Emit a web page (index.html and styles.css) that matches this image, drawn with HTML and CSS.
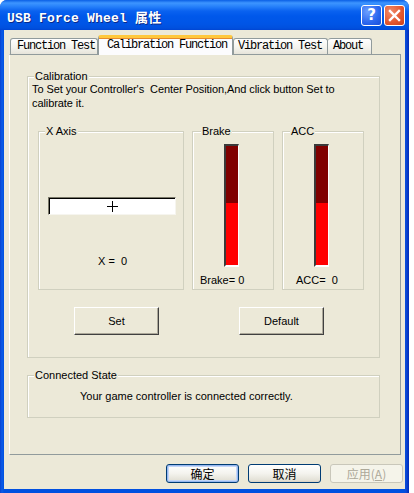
FILE: index.html
```html
<!DOCTYPE html>
<html>
<head>
<meta charset="utf-8">
<link rel="stylesheet" href="styles.css">
</head>
<body>
<div class="window">
  <div class="titlebar">
    <span class="title">USB Force Wheel <span class="cjk">属性</span></span>
    <div class="tbtns">
      <span class="tbtn help">?</span>
      <span class="tbtn close"><svg width="13" height="13" viewBox="0 0 13 13"><path d="M2 2 L11 11 M11 2 L2 11" stroke="#fff" stroke-width="2.4" stroke-linecap="square"/></svg></span>
    </div>
  </div>
  <div class="body">
    <div class="tabs">
      <div class="tab t1">Function Test</div>
      <div class="tab t2 active">Calibration Function</div>
      <div class="tab t3">Vibration Test</div>
      <div class="tab t4">About</div>
    </div>
    <div class="panel">
      <div class="group cal">
        <span class="glabel">Calibration</span>
        <p class="intro">To Set your Controller's&nbsp; Center Position,And click button Set to<br>calibrate it.</p>
        <div class="axes">
          <div class="group xaxis">
            <span class="glabel">X Axis</span>
            <div class="slider"><svg width="11" height="11" viewBox="0 0 11 11"><path d="M5.5 0 V11 M0 5.5 H11" stroke="#000" stroke-width="1"/></svg></div>
            <div class="val">X =&nbsp; 0</div>
          </div>
          <div class="group pedal brake">
            <span class="glabel">Brake</span>
            <div class="bar"><div class="fill" style="height:62px"></div></div>
            <div class="val">Brake= 0</div>
          </div>
          <div class="group pedal acc">
            <span class="glabel">ACC</span>
            <div class="bar"><div class="fill" style="height:62px"></div></div>
            <div class="val">ACC=&nbsp; 0</div>
          </div>
        </div>
        <div class="actions">
          <button class="cbtn">Set</button>
          <button class="cbtn">Default</button>
        </div>
      </div>
      <div class="group conn">
        <span class="glabel">Connected State</span>
        <div class="state">Your game controller is connected correctly.</div>
      </div>
    </div>
    <div class="footer">
      <button class="xbtn default">确定</button>
      <button class="xbtn">取消</button>
      <button class="xbtn disabled">应用(<u>A</u>)</button>
    </div>
  </div>
</div>
</body>
</html>
```
FILE: styles.css
```css
html, body {
  margin: 0;
  padding: 0;
  background: #ffffff;
}
body {
  font-family: "Liberation Sans", Arial, sans-serif;
  font-size: 11px;
  color: #000;
}
.window {
  width: 409px;
  height: 493px;
  box-sizing: border-box;
  display: flex;
  flex-direction: column;
  background: linear-gradient(to right, #0842D0 0, #0A5BE8 2px, #0050E0 4px, #0050E0 404px, #0A4AD8 406px, #0029B8 409px);
  border-radius: 7px 7px 0 0;
  overflow: hidden;
}
.titlebar {
  height: 30px;
  flex: none;
  display: flex;
  align-items: center;
  justify-content: space-between;
  padding: 0 4px 0 7px;
  background: linear-gradient(to bottom, #0A5FE5 0, #3D95FF 3px, #2A84FB 6px, #0A62F0 11px, #0058EB 16px, #0055E6 24px, #0050DE 28px, #0045D3 30px);
}
.title {
  color: #fff;
  font-family: "Liberation Mono", monospace;
  font-weight: bold;
  font-size: 13px;
  letter-spacing: 0.2px;
  text-shadow: 1px 1px 0 #0A2A8A;
  padding-top: 2px;
}
.title .cjk {
  font-family: "Noto Sans CJK SC", sans-serif;
  font-size: 13px;
}
.tbtns {
  display: flex;
  gap: 2px;
  margin-top: 1px;
}
.tbtn {
  width: 21px;
  height: 21px;
  box-sizing: border-box;
  border: 1px solid #fff;
  border-radius: 3px;
  display: flex;
  align-items: center;
  justify-content: center;
}
.help {
  background: radial-gradient(circle at 30% 30%, #6CA0FF, #2A66EE 60%, #1A4FD8);
  color: #fff;
  font-family: "DejaVu Sans", sans-serif;
  font-weight: bold;
  font-size: 15px;
  line-height: 19px;
}
.close {
  background: radial-gradient(circle at 30% 30%, #F08A6A, #E2562E 60%, #C8401C);
}
.body {
  flex: 1;
  margin: 0 4px 4px 4px;
  background: #ECE9D8;
  padding: 5px 0 6px 0;
  display: flex;
  flex-direction: column;
}
.tabs {
  height: 19px;
  flex: none;
  display: flex;
  align-items: flex-end;
  padding-left: 6px;
  position: relative;
  z-index: 1;
}
.tab {
  height: 16px;
  box-sizing: border-box;
  border: 1px solid #919B9C;
  border-bottom: none;
  border-radius: 3px 3px 0 0;
  background: linear-gradient(to bottom, #FFFFFF, #F3F2EC 60%, #E6E4DA);
  font-family: "Liberation Mono", monospace;
  font-size: 12px;
  letter-spacing: -1.2px;
  line-height: 15px;
  white-space: nowrap;
}
.tab + .tab { border-left: none; }
.t1 { width: 88px; padding-left: 6px; }
.t2 { width: 135px; padding-left: 8px; }
.t3 { width: 95px; padding-left: 4px; border-left: 1px solid #919B9C !important; }
.t4 { width: 44px; padding-left: 5px; }
.tab.active {
  height: 20px;
  margin-bottom: -1px;
  background: #FCFCFE;
  border-top: 3px solid #FFC83C;
  border-left: 1px solid #919B9C;
  line-height: 14px;
  box-shadow: inset 0 1px 0 #E68B2C;
}
.panel {
  height: 401px;
  width: 392px;
  box-sizing: border-box;
  margin-left: 5px;
  border: 1px solid #919B9C;
  border-left-color: #FFFFFF;
  background: #ECE9D8;
  padding: 21px 20px 0 17px;
}
.group {
  position: relative;
  box-sizing: border-box;
  border: 1px solid #D0D0BF;
  box-shadow: inset 1px 1px 0 #FFFFFF;
}
.glabel {
  position: absolute;
  top: -7px;
  left: 6px;
  padding: 0 1px;
  background: #ECE9D8;
  line-height: 13px;
  white-space: nowrap;
}
.cal {
  height: 282px;
  padding: 5px 0 0 4px;
}
.intro {
  margin: 0;
  line-height: 14px;
  white-space: nowrap;
  letter-spacing: -0.08px;
}
.axes {
  display: flex;
  gap: 8px;
  margin: 21px 0 0 6px;
  height: 159px;
}
.xaxis {
  width: 146px;
  height: 159px;
  padding: 65px 0 0 9px;
}
.slider {
  width: 128px;
  height: 18px;
  box-sizing: border-box;
  background: #FFFFFF;
  border-top: 1px solid #7A7868;
  border-left: 1px solid #7A7868;
  border-right: 1px solid #F6F5EF;
  border-bottom: 1px solid #F6F5EF;
  box-shadow: inset 1px 1px 0 #000;
  display: flex;
  align-items: center;
  justify-content: center;
}
.slider svg { margin-left: 1px; }
.val {
  line-height: 13px;
  white-space: nowrap;
}
.xaxis .val {
  margin-top: 40px;
  padding-left: 50px;
}
.pedal {
  width: 82px;
  height: 159px;
  padding: 12px 0 0 31px;
}
.bar {
  width: 15px;
  height: 123px;
  box-sizing: border-box;
  border-top: 2px solid #3A3A3A;
  border-left: 2px solid #3A3A3A;
  border-right: 1px solid #FFFFFF;
  border-bottom: 2px solid #FFFFFF;
  background: #800000;
  display: flex;
  flex-direction: column;
  justify-content: flex-end;
}
.fill {
  background: #FF0000;
}
.pedal .val { margin-top: 7px; }
.brake .val { margin-left: -24px; }
.acc .val { margin-left: -18px; }
.acc .glabel { left: 7px; }
.brake .glabel { left: 8px; }
.actions {
  display: flex;
  gap: 80px;
  margin-top: 17px;
  padding-left: 42px;
}
.cbtn {
  width: 85px;
  height: 28px;
  box-sizing: border-box;
  background: #ECE9D8;
  border: 1px solid;
  border-color: #FFFFFF #404040 #404040 #FFFFFF;
  box-shadow: inset -1px -1px 0 #ACA899;
  font-family: "Liberation Sans", Arial, sans-serif;
  font-size: 11px;
  color: #000;
  padding: 0;
}
.conn {
  margin-top: 17px;
  height: 43px;
  padding: 14px 0 0 52px;
}
.state {
  line-height: 13px;
  white-space: nowrap;
}
.footer {
  margin-top: 9px;
  display: flex;
  justify-content: flex-end;
  gap: 9px;
  padding-right: 2px;
}
.xbtn {
  width: 73px;
  height: 19px;
  box-sizing: border-box;
  border: 1px solid #003C74;
  border-radius: 3px;
  background: linear-gradient(to bottom, #FFFFFF, #F4F3EE 50%, #E3E1D6 90%, #D6D0C5);
  font-family: "Noto Sans CJK SC", sans-serif;
  font-size: 12px;
  line-height: 15px;
  color: #000;
  padding: 0;
}
.xbtn.default {
  box-shadow: inset 0 0 0 1px #98B8F0, inset 0 0 0 2px #C4D6F6;
}
.xbtn.disabled {
  border-color: #C9C7BA;
  background: #F5F4EA;
  color: #ACA899;
}
.xbtn u { text-decoration: underline; }
```
